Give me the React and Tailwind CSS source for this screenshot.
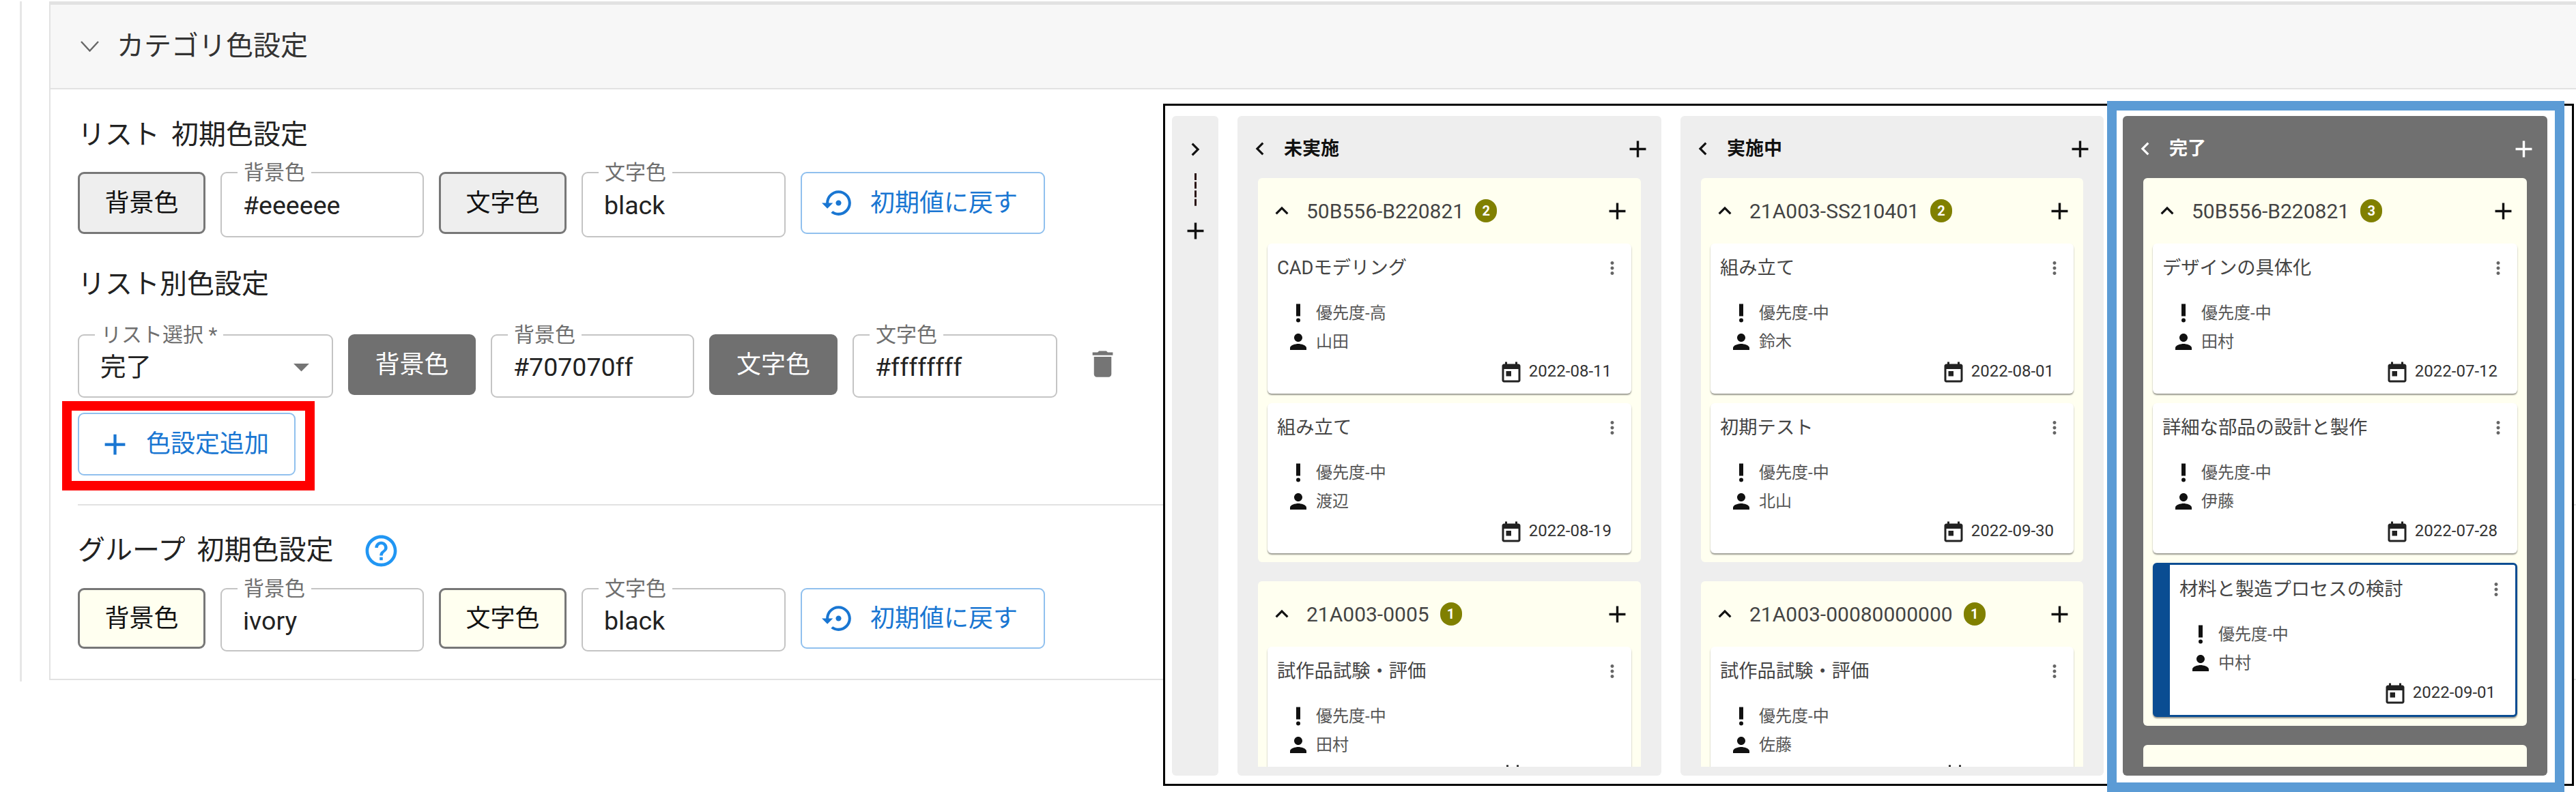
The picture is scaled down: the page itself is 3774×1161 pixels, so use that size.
const ICONS = {
  add: "M19 13h-6v6h-2v-6H5v-2h6V5h2v6h6v2z",
  left: "M15.41 7.41 14 6l-6 6 6 6 1.41-1.41L10.83 12z",
  right: "M8.59 16.59 10 18l6-6-6-6-1.41 1.41L13.17 12z",
  up: "M12 8l-6 6 1.41 1.41L12 10.83l4.59 4.58L18 14z",
  more: "M12 8c1.1 0 2-.9 2-2s-.9-2-2-2-2 .9-2 2 .9 2 2 2zm0 2c-1.1 0-2 .9-2 2s.9 2 2 2 2-.9 2-2-.9-2-2-2zm0 6c-1.1 0-2 .9-2 2s.9 2 2 2 2-.9 2-2-.9-2-2-2z",
  priority: "M10 3h4v12h-4zM12 17a2 2 0 1 0 0 4 2 2 0 0 0 0-4z",
  person: "M12 12c2.21 0 4-1.79 4-4s-1.79-4-4-4-4 1.79-4 4 1.79 4 4 4zm0 2c-2.67 0-8 1.34-8 4v2h16v-2c0-2.66-5.33-4-8-4z",
  today: "M19 3h-1V1h-2v2H8V1H6v2H5c-1.11 0-1.99.9-1.99 2L3 19c0 1.1.89 2 2 2h14c1.1 0 2-.9 2-2V5c0-1.1-.9-2-2-2zm0 16H5V8h14v11zM7 10h5v5H7z",
  restore: "M14 12c0-1.1-.9-2-2-2s-2 .9-2 2 .9 2 2 2 2-.9 2-2zm-2-9c-4.97 0-9 4.03-9 9H0l4 4 4-4H5c0-3.87 3.13-7 7-7s7 3.13 7 7-3.13 7-7 7c-1.51 0-2.91-.49-4.06-1.3l-1.42 1.44C8.04 20.3 9.94 21 12 21c4.97 0 9-4.03 9-9s-4.03-9-9-9z",
  trash: "M6 19c0 1.1.9 2 2 2h8c1.1 0 2-.9 2-2V7H6v12zM19 4h-3.5l-1-1h-5l-1 1H5v2h14V4z",
  help: "M11 18h2v-2h-2v2zm1-16C6.48 2 2 6.48 2 12s4.48 10 10 10 10-4.48 10-10S17.52 2 12 2zm0 18c-4.41 0-8-3.59-8-8s3.59-8 8-8 8 3.59 8 8-3.59 8-8 8zm0-14c-2.21 0-4 1.79-4 4h2c0-1.1.9-2 2-2s2 .9 2 2c0 2-3 1.75-3 5h2c0-2.25 3-2.5 3-5 0-2.21-1.79-4-4-4z",
  drop: "M7 10l5 5 5-5z",
};

const Icon = ({ name, className }) => (
  <svg viewBox="0 0 24 24" fill="currentColor" className={`shrink-0 ${className}`}>
    <path d={ICONS[name]} />
  </svg>
);

const LISTS = [
  {
    title: "未実施",
    groups: [
      {
        code: "50B556-B220821",
        count: 2,
        tasks: [
          { title: "CADモデリング", priority: "高", who: "山田", date: "2022-08-11" },
          { title: "組み立て", priority: "中", who: "渡辺", date: "2022-08-19" },
        ],
      },
      {
        code: "21A003-0005",
        count: 1,
        tasks: [{ title: "試作品試験・評価", priority: "中", who: "田村" }],
      },
    ],
  },
  {
    title: "実施中",
    groups: [
      {
        code: "21A003-SS210401",
        count: 2,
        tasks: [
          { title: "組み立て", priority: "中", who: "鈴木", date: "2022-08-01" },
          { title: "初期テスト", priority: "中", who: "北山", date: "2022-09-30" },
        ],
      },
      {
        code: "21A003-00080000000",
        count: 1,
        tasks: [{ title: "試作品試験・評価", priority: "中", who: "佐藤" }],
      },
    ],
  },
  {
    title: "完了",
    dark: true,
    groups: [
      {
        code: "50B556-B220821",
        count: 3,
        tasks: [
          { title: "デザインの具体化", priority: "中", who: "田村", date: "2022-07-12" },
          { title: "詳細な部品の設計と製作", priority: "中", who: "伊藤", date: "2022-07-28" },
          { title: "材料と製造プロセスの検討", priority: "中", who: "中村", date: "2022-09-01", selected: true },
        ],
      },
      { tasks: [] },
    ],
  },
];

const ColorButton = ({ label, className }) => (
  <button className={`flex shrink-0 items-center justify-center rounded-[9px] text-[36px] ${className}`}>{label}</button>
);

const OutlineField = ({ label, value, className, children }) => (
  <div className={`relative flex shrink-0 items-center rounded-[9px] border-2 border-[#c4c4c4] pl-[31px] text-[37.5px] text-[#222] ${className}`}>
    <span className="absolute top-[-16px] left-[23px] bg-white px-[9px] text-[30px] leading-[30px] text-[#6f6f6f]">{label}</span>
    <span className="pt-[3px]">{value}</span>
    {children}
  </div>
);

const DefaultColors = ({ fill, inputH, btnH, bgValue, textValue }) => (
  <div className="flex items-start gap-[22px]">
    <ColorButton label="背景色" className={`${btnH} w-[187px] border-[3px] border-[#777] text-[#111] ${fill}`} />
    <OutlineField label="背景色" value={bgValue} className={`${inputH} w-[298px]`} />
    <ColorButton label="文字色" className={`${btnH} w-[187px] border-[3px] border-[#777] text-[#111] ${fill}`} />
    <OutlineField label="文字色" value={textValue} className={`${inputH} w-[299px]`} />
    <button className={`${btnH} flex w-[358px] items-center gap-[22px] rounded-[9px] border-2 border-[#90c0ee] pl-[29px] text-[36px] text-[#1976d2]`}>
      <Icon name="restore" className="h-[49px] w-[49px]" />
      初期値に戻す
    </button>
  </div>
);

const TaskCard = ({ task }) => (
  <div
    className={`box-content h-[220px] shrink-0 rounded-[6px] bg-white shadow-[0_2px_2px_rgba(0,0,0,0.4)] ${
      task.selected ? "border-[3px] border-l-[25px] border-[#0a4d92]" : ""
    }`}
  >
    <div className="flex h-[70px] items-center justify-between pt-[2px] pr-[13px] pl-[14px] text-[27.3px] text-[#444]">
      {task.title}
      <Icon name="more" className="h-[30px] w-[30px] text-[#666]" />
    </div>
    <div className="mt-[11px] flex h-[42px] items-center gap-[8px] pl-[27px] text-[24px] text-[#555]">
      <Icon name="priority" className="h-[36px] w-[36px] text-[#111]" />
      優先度-{task.priority}
    </div>
    <div className="flex h-[42px] items-center gap-[8px] pl-[27px] text-[24px] text-[#555]">
      <Icon name="person" className="h-[36px] w-[36px] text-[#111]" />
      {task.who}
    </div>
    <div className="flex h-[44px] items-center justify-end gap-[8px] pr-[29px] text-[24px] text-[#333]">
      <Icon name="today" className="mt-[5px] h-[36px] w-[36px] text-[#222]" />
      <span className="min-w-[119px]">{task.date}</span>
    </div>
  </div>
);

const TaskGroup = ({ group }) => (
  <div className="shrink-0 rounded-[6px] bg-[#fffff0] px-[14px] pb-[13px]">
    {group.code && (
      <div className="flex h-[96px] items-center pl-[2px]">
        <Icon name="up" className="h-[38px] w-[38px] text-[#111]" />
        <span className="ml-[17px] text-[30px] text-[#444]">{group.code}</span>
        <span className="ml-[16px] flex h-[34px] w-[32px] items-center justify-center rounded-full bg-[#808000] text-[20px] font-bold text-white">
          {group.count}
        </span>
        <Icon name="add" className="ml-auto h-[41px] w-[41px] text-[#111]" />
      </div>
    )}
    {group.tasks.length > 0 ? (
      <div className="flex flex-col gap-[14px]">
        {group.tasks.map((task) => (
          <TaskCard key={task.title} task={task} />
        ))}
      </div>
    ) : (
      <div className="h-[80px]" />
    )}
  </div>
);

const ListColumn = ({ list, className }) => (
  <div className={`flex flex-col rounded-[6px] ${list.dark ? "bg-[#707070] text-white" : "bg-[#eeeeee] text-[#111]"} ${className}`}>
    <div className="flex h-[91px] items-center pt-[5px] pr-[14px] pl-[14px]">
      <Icon name="left" className="h-[38px] w-[38px]" />
      <span className="ml-[16px] text-[27px] font-bold">{list.title}</span>
      <Icon name="add" className="ml-auto h-[41px] w-[41px]" />
    </div>
    <div className="flex h-[863px] flex-col gap-[28px] overflow-hidden px-[30px]">
      {list.groups.map((group, i) => (
        <TaskGroup key={i} group={group} />
      ))}
    </div>
  </div>
);

const BoardPreview = () => (
  <div className="absolute top-[152px] left-[1704px] flex h-[1000px] w-[2067px] gap-[28px] border-[3px] border-black bg-white pt-[15px] pl-[10px]">
    <div className="flex h-[967px] w-[68px] flex-col items-center rounded-[6px] bg-[#eeeeee] pt-[30px] text-[#111]">
      <Icon name="right" className="h-[38px] w-[38px]" />
      <svg viewBox="0 0 3 48" className="mt-[16px] h-[48px] w-[3px]">
        <line x1="1.5" y1="0" x2="1.5" y2="48" stroke="#2a1414" strokeWidth="3" strokeDasharray="10 2.6" />
      </svg>
      <Icon name="add" className="mt-[16px] h-[41px] w-[41px]" />
    </div>
    <ListColumn list={LISTS[0]} className="h-[967px] w-[621px]" />
    <ListColumn list={LISTS[1]} className="h-[967px] w-[620px]" />
    <ListColumn list={LISTS[2]} className="h-[967px] w-[622px]" />
  </div>
);

const Heading = ({ children, className }) => (
  <div className={`flex h-[50px] items-center text-[40px] text-[#222] [word-spacing:7px] ${className}`}>{children}</div>
);

export default function App() {
  return (
    <div className="relative h-[1161px] w-[3774px] overflow-hidden bg-white font-[Roboto,'Noto_Sans_CJK_JP',sans-serif]">
      <div className="ml-[29px] h-[997px] border-l-[3px] border-[#e6e6e6] pl-[40px]">
        <section className="mt-[2px] box-border h-[995px] border-t-[5px] border-b-[2px] border-l-[2px] border-[#e2e2e2]">
          <div className="flex h-[124px] items-center gap-[26px] border-b-[2px] border-[#e2e2e2] bg-[#f7f7f7] pb-[1px] pl-[44px]">
            <svg viewBox="0 0 27 16" className="h-[16px] w-[27px] text-[#666]" fill="none" stroke="currentColor" strokeWidth="2.4">
              <path d="M1 1 13.5 14.5 26 1" />
            </svg>
            <span className="text-[40px] text-[#333]">カテゴリ色設定</span>
          </div>
          <div className="pl-[40px]">
            <Heading className="mt-[42px]">リスト 初期色設定</Heading>
            <div className="mt-[29px]">
              <DefaultColors fill="bg-[#eeeeee]" inputH="h-[96px]" btnH="h-[91px]" bgValue="#eeeeee" textValue="black" />
            </div>
            <Heading className="mt-[44px]">リスト別色設定</Heading>
            <div className="mt-[48px] flex items-start gap-[22px]">
              <OutlineField label="リスト選択 *" value="完了" className="h-[93px] w-[374px]">
                <Icon name="drop" className="absolute top-[18px] right-[17px] h-[55px] w-[55px] text-[#757575]" />
              </OutlineField>
              <ColorButton label="背景色" className="h-[89px] w-[187px] bg-[#707070] text-white" />
              <OutlineField label="背景色" value="#707070ff" className="h-[93px] w-[298px]" />
              <ColorButton label="文字色" className="h-[89px] w-[188px] bg-[#707070] text-white" />
              <OutlineField label="文字色" value="#ffffffff" className="h-[93px] w-[300px]" />
              <Icon name="trash" className="mt-[18px] ml-[19px] h-[51px] w-[51px] text-[#757575]" />
            </div>
            <div className="relative mt-[22px] w-fit">
              <button className="flex h-[92px] w-[319px] items-center gap-[20px] rounded-[9px] border-2 border-[#90c0ee] pl-[27px] text-[36px] text-[#1976d2]">
                <Icon name="add" className="h-[51px] w-[51px]" />
                色設定追加
              </button>
              <div className="absolute top-[-17px] left-[-23px] h-[131px] w-[370px] border-[14px] border-[#ff0000]" />
            </div>
            <div className="mt-[42px] h-[2px] bg-[#e2e2e2]" />
            <Heading className="mt-[41px] gap-[42px]">
              グループ 初期色設定
              <Icon name="help" className="h-[55px] w-[55px] text-[#2196f3]" />
            </Heading>
            <div className="mt-[30px]">
              <DefaultColors fill="bg-[#fffff0]" inputH="h-[93px]" btnH="h-[89px]" bgValue="ivory" textValue="black" />
            </div>
          </div>
        </section>
      </div>
      <BoardPreview />
      <div className="absolute top-[148px] left-[3087px] h-[1013px] w-[670px] border-[14px] border-[#5b9bd5]" />
    </div>
  );
}
